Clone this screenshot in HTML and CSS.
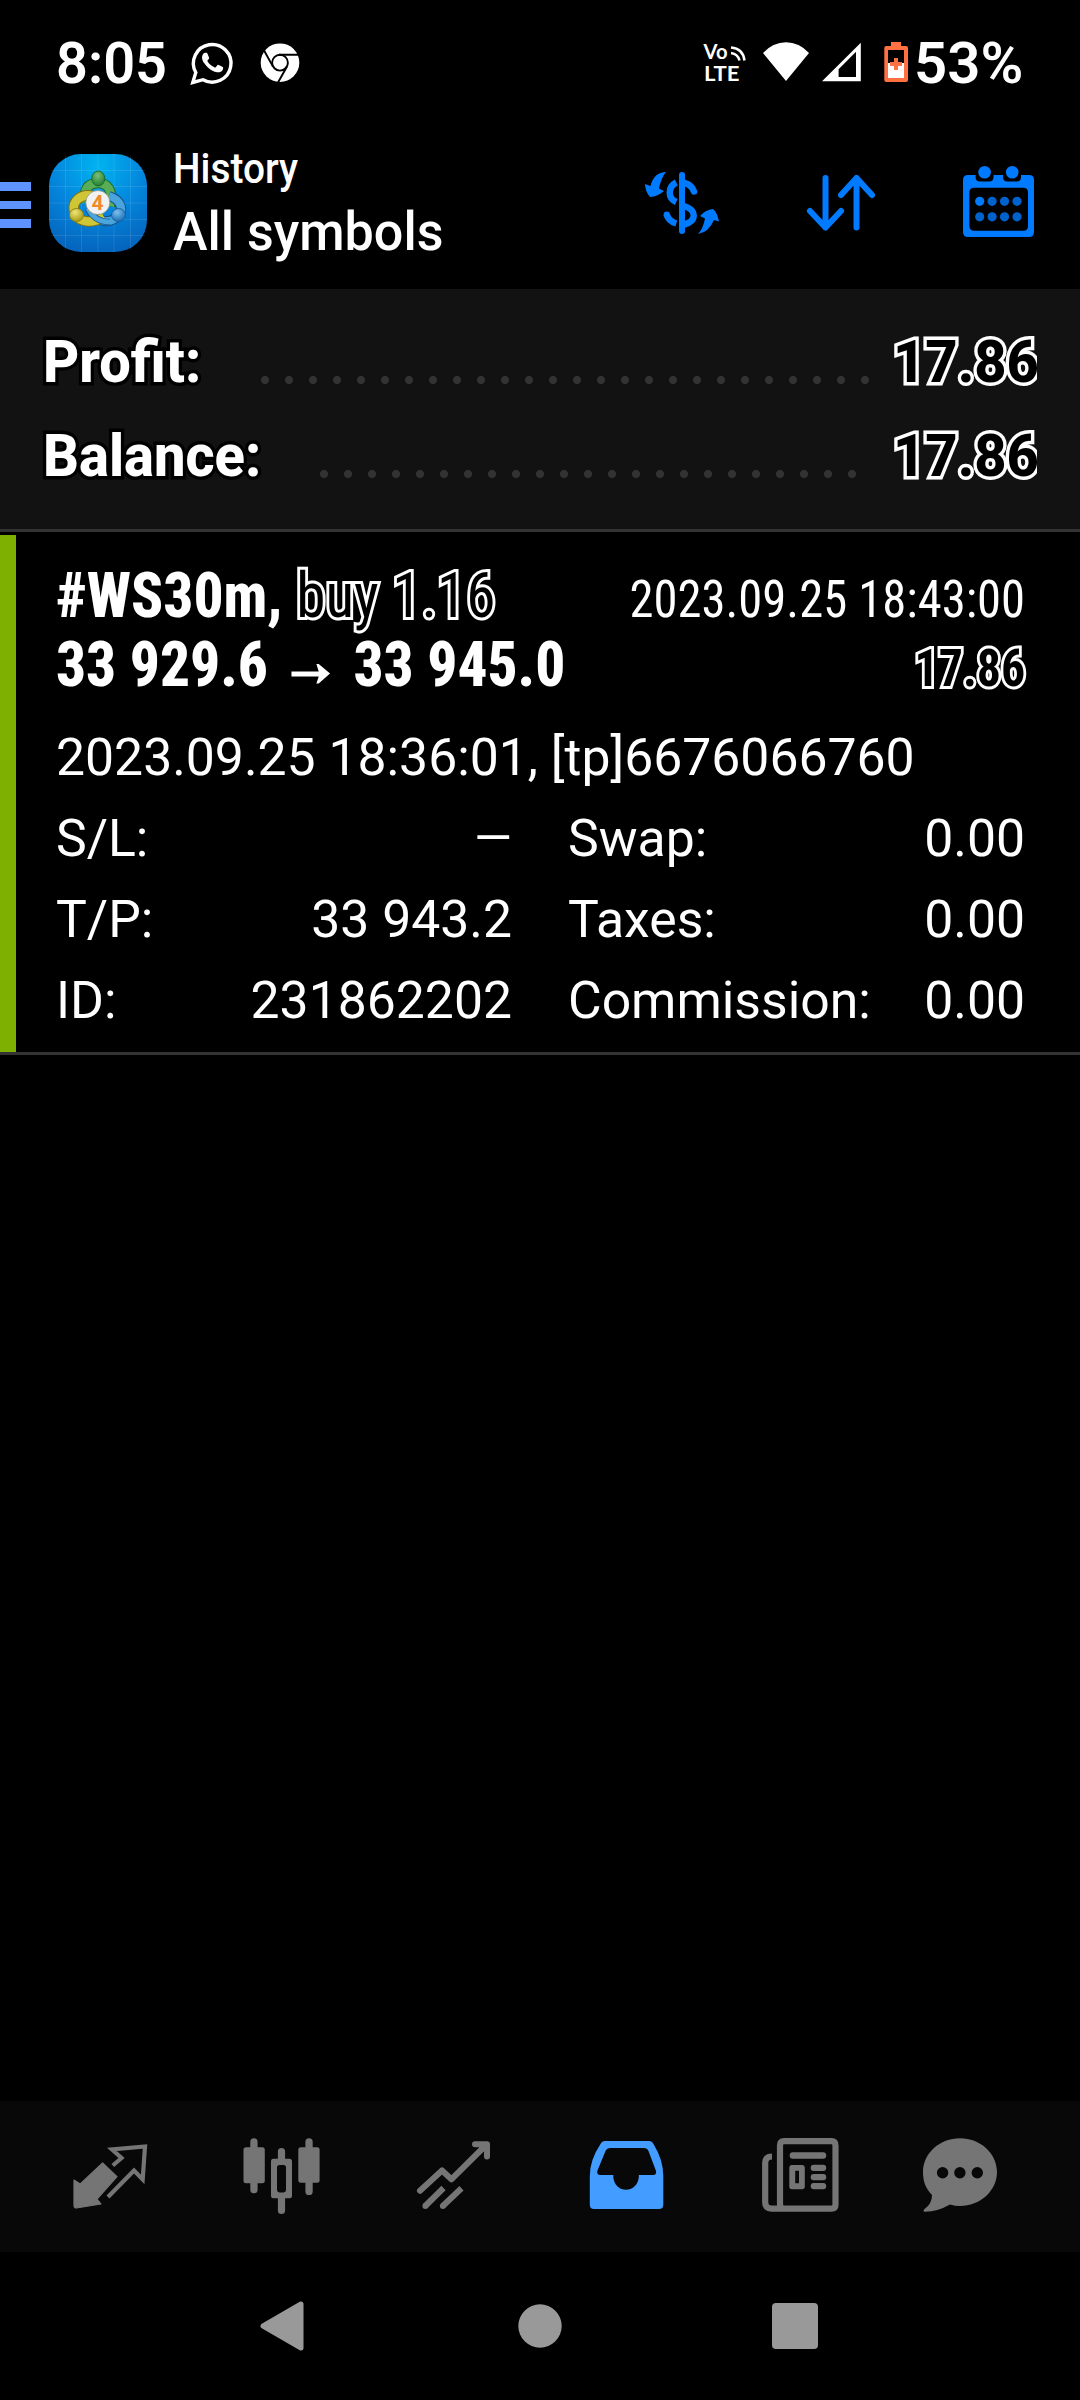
FILE: index.html
```html
<!DOCTYPE html>
<html lang="en">
<head>
<meta charset="utf-8">
<title>History</title>
<link rel="stylesheet" href="styles.css">
</head>
<body>
<div class="status">
  <span class="clock">8:05</span>
  <svg class="ic-apps" viewBox="188 38 114 50" width="114" height="50">
    <path d="M192.800 82.500L195.800 72.500A18.800 18.800 0 1 1 203 79.700Z" fill="none" stroke="#fff" stroke-width="3.400"/>
    <path transform="translate(191.500 41.500) scale(1.750)" fill="#fff" d="M17.472 14.382c-.297-.149-1.758-.867-2.03-.967-.273-.099-.471-.148-.67.15-.197.297-.767.966-.94 1.164-.173.199-.347.223-.644.075-.297-.15-1.255-.463-2.39-1.475-.883-.788-1.48-1.761-1.653-2.059-.173-.297-.018-.458.13-.606.134-.133.298-.347.446-.52.149-.174.198-.298.298-.497.099-.198.05-.371-.025-.52-.075-.149-.669-1.612-.916-2.207-.242-.579-.487-.5-.669-.51-.173-.008-.371-.01-.57-.01-.198 0-.52.074-.792.372-.272.297-1.04 1.016-1.04 2.479 0 1.462 1.065 2.875 1.213 3.074.149.198 2.096 3.2 5.077 4.487.709.306 1.262.489 1.694.625.712.227 1.36.195 1.871.118.571-.085 1.758-.719 2.006-1.413.248-.694.248-1.289.173-1.413-.074-.124-.272-.198-.57-.347"/>
    <circle cx="280" cy="62.700" r="19.300" fill="#fff"/>
    <g fill="none" stroke="#000" stroke-width="1.900">
      <circle cx="280" cy="62.700" r="7.900"/>
      <path d="M279 54.800H299M263.800 50L273 66.600M287 66.500L278 82.500"/>
    </g>
  </svg>
  <svg class="ic-signal" viewBox="700 38 212 48" width="212" height="48">
    <g class="volte">
      <text x="703.500" y="59" textLength="24" lengthAdjust="spacingAndGlyphs">Vo</text>
      <text x="704" y="80.500" textLength="35.500" lengthAdjust="spacingAndGlyphs">LTE</text>
    </g>
    <path d="M731 47.500Q743 48.500 744.500 60.500M731 53Q738 54 739.500 60.500" fill="none" stroke="#fff" stroke-width="2.500"/>
    <path d="M763 53Q773 42.300 786 42.300T809 53L786 81Z" fill="#fff"/>
    <path fill="#fff" fill-rule="evenodd" d="M822 81.300L860.800 42.700V81.300ZM838.600 69.300V77H856V51.700Z"/>
    <path fill="#ff7043" d="M891 42h10v4h5q2 0 2 2v32q0 2-2 2h-19.700q-2 0-2-2V48q0-2 2-2H891z"/>
    <path fill="#000" d="M888 50h16v13h-16z"/>
    <path fill="#fff" d="M888 63h16v15h-16z"/>
    <path fill="none" stroke="#ff7043" stroke-width="4" d="M896 58v12M890 64h12"/>
  </svg>
  <span class="battery">53%</span>
</div>

<header class="bar">
  <div class="menu"><i></i><i></i><i></i></div>
  <svg class="logo" viewBox="49 154 98 98" width="98" height="98">
    <defs>
      <radialGradient id="sky" cx=".5" cy=".12" r=".95"><stop offset="0" stop-color="#00b4f0"/><stop offset=".5" stop-color="#0485dc"/><stop offset="1" stop-color="#0560b8"/></radialGradient>
      <radialGradient id="gr" cx=".45" cy=".3" r=".7"><stop offset="0" stop-color="#7cc078"/><stop offset="1" stop-color="#1f7f2e"/></radialGradient>
      <radialGradient id="ye" cx=".4" cy=".3" r=".7"><stop offset="0" stop-color="#f0e67a"/><stop offset="1" stop-color="#a99c12"/></radialGradient>
      <radialGradient id="bl" cx=".4" cy=".3" r=".7"><stop offset="0" stop-color="#7cc0ee"/><stop offset="1" stop-color="#1a6fb5"/></radialGradient>
    </defs>
    <rect x="49" y="154" width="98" height="98" rx="32" fill="url(#sky)"/>
    <path d="M65.500 156V250M81.500 154V252M98 154V252M114 154V252M130.500 156V250M51 170.500H145M49 186.500H147M49 203H147M49 219.500H147M51 235.500H145" stroke="#fff" stroke-opacity=".1" fill="none"/>
    <path d="M86 202C82 189 89 183 98 183S114 190 110 206" fill="none" stroke="#1d6b2b" stroke-width="10.500"/>
    <path d="M86 202C82 189 89 183 98 183S114 190 110 206" fill="none" stroke="#58ad56" stroke-width="8.500"/>
    <path d="M109 196C122 200 125 212 116 218S98 222 90 209" fill="none" stroke="#14538c" stroke-width="10"/>
    <path d="M109 196C122 200 125 212 116 218S98 222 90 209" fill="none" stroke="#4aa5df" stroke-width="8"/>
    <path d="M93 196C80 193 72 202 74 211S88 226 104 217" fill="none" stroke="#7d7412" stroke-width="10.500"/>
    <path d="M93 196C80 193 72 202 74 211S88 226 104 217" fill="none" stroke="#cfc637" stroke-width="8.500"/>
    <path d="M88 208C92 217 99 222 110 222" fill="none" stroke="#14538c" stroke-width="6.500"/>
    <path d="M88 208C92 217 99 222 110 222" fill="none" stroke="#4aa5df" stroke-width="5"/>
    <ellipse cx="98.300" cy="178.500" rx="6.500" ry="7.500" fill="url(#gr)" stroke="#1d6b2b"/>
    <ellipse cx="76.500" cy="215" rx="7" ry="6.500" fill="url(#ye)" stroke="#8c8214"/>
    <ellipse cx="118.500" cy="215" rx="7" ry="6.500" fill="url(#bl)" stroke="#1a5f9f"/>
    <circle cx="97.800" cy="202.500" r="12" fill="#f1f1f4" stroke="#8b8b6a" stroke-width=".7"/>
    <text class="four" x="97.500" y="210" text-anchor="middle">4</text>
  </svg>
  <div class="titles"><span class="t1">History</span><span class="t2">All symbols</span></div>
  <svg class="tools" viewBox="640 160 400 84" width="400" height="84" fill="#007aff">
    <rect x="679" y="172" width="6" height="62" rx="3"/>
    <g fill="none" stroke="#007aff" stroke-width="6.500">
      <path d="M676.300 182.500C667.500 187 667.500 198 676.300 202"/>
      <path d="M684.500 183C689 184 692.500 187 694 191.500" stroke-linecap="round"/>
      <path d="M684 206C697 210 697 221 684 224.500"/>
      <path d="M676.300 223.500C671.500 222 668 219 666.700 214.500"/>
    </g>
    <circle cx="666.800" cy="214.800" r="3.200"/>
    <path d="M666 172Q654 172 650.500 186L645 184Q645 191 650 197Q658 196.500 664 191L659 188.500Q661 178 666 172Z"/>
    <path d="M698 234Q703 229 705 218.500L700 216Q705 210 713 209Q717 212 719 221.500L714 220Q709 232 698 234Z"/>
    <g fill="none" stroke="#007aff" stroke-width="6" stroke-linecap="round" stroke-linejoin="round">
      <path d="M825.500 178V227.500M810 211L825.500 227.500L841 211"/>
      <path d="M856.500 227.500V178M841 195L856.500 178L872 195"/>
    </g>
    <path fill-rule="evenodd" d="M968 175H975.600V177Q975.600 181.600 980 181.600H989Q993.500 181.600 993.500 177V175H1003V177Q1003 181.600 1007.500 181.600H1016.500Q1021 181.600 1021 177V175H1029Q1034 175 1034 180V232Q1034 237 1029 237H968Q963 237 963 232V180Q963 175 968 175ZM974 187.700Q969.400 187.700 969.400 192.500V226Q969.400 230.700 974 230.700H1023.500Q1028 230.700 1028 226V192.500Q1028 187.700 1023.500 187.700Z"/>
    <circle cx="984.600" cy="172.300" r="6.300"/><circle cx="1012.200" cy="172.300" r="6.300"/>
    <circle cx="979.700" cy="201.300" r="4.600"/>
    <g fill="#0062cc"><circle cx="992.100" cy="201.300" r="4.600"/><circle cx="1004.500" cy="201.300" r="4.600"/><circle cx="1017" cy="201.300" r="4.600"/><circle cx="979.700" cy="216.800" r="4.600"/><circle cx="992.100" cy="216.800" r="4.600"/><circle cx="1004.500" cy="216.800" r="4.600"/><circle cx="1017" cy="216.800" r="4.600"/></g>
  </svg>
</header>

<section class="summary">
  <div class="sum-row"><span class="sum-label">Profit:</span><i class="dots d1"></i><div class="sum-clip"><span class="sum-val">17.86</span></div></div>
  <div class="sum-row"><span class="sum-label">Balance:</span><i class="dots d2"></i><div class="sum-clip"><span class="sum-val">17.86</span></div></div>
</section>

<main class="deal">
  <div class="deal-body">
    <div class="head"><div class="sym">#WS30m, <span class="buy">buy 1.16</span></div><div class="when">2023.09.25 18:43:00</div></div>
    <div class="head"><div class="sym">33 929.6 <span class="arrow"><svg viewBox="0 0 41 20" width="42" height="20"><path d="M0 7.500H29L26.500 0H29L41 9.500L29 19.500H26.500L29 12.500H0Z" fill="#fff"/></svg></span> 33 945.0</div><div class="gain">17.86</div></div>
    <div class="line first">2023.09.25 18:36:01, [tp]6676066760</div>
    <div class="grid">
      <span>S/L:</span><b class="dash">—</b><span>Swap:</span><b>0.00</b>
      <span>T/P:</span><b>33 943.2</b><span>Taxes:</span><b>0.00</b>
      <span>ID:</span><b>231862202</b><span>Commission:</span><b>0.00</b>
    </div>
  </div>
</main>

<nav class="tabs">
  <svg viewBox="0 2101 1080 151" width="1080" height="151" fill="#757575">
    <path d="M74 2180L80.200 2184L102.600 2163L117 2176.700L97 2199L101 2204L76.400 2208Q74 2208 74 2205.500Z" stroke="#757575" stroke-width="1.200" stroke-linejoin="round"/>
    <path d="M112.800 2165.500L121.500 2158L112 2149.500L145 2146.500L142.700 2179.500L134 2170.500L108 2197" fill="none" stroke="#757575" stroke-width="4.200"/>
    <rect x="243.500" y="2147.300" width="21.300" height="36" rx="2.500"/><rect x="250.300" y="2138.300" width="7.300" height="55" rx="3.600"/>
    <path fill-rule="evenodd" d="M273.500 2158.700H277.900V2151.500A3.600 3.600 0 0 1 285.100 2151.500V2158.700H289.500Q292 2158.700 292 2161.200V2195.800Q292 2198.300 289.500 2198.300H285.100V2210.500A3.600 3.600 0 0 1 277.900 2210.500V2198.300H273.500Q271 2198.300 271 2195.800V2161.200Q271 2158.700 273.500 2158.700ZM279.500 2165Q277 2165 277 2167.500V2190Q277 2192.400 279.500 2192.400H283.500Q286 2192.400 286 2190V2167.500Q286 2165 283.500 2165Z"/>
    <rect x="298.300" y="2147.300" width="21.300" height="35.500" rx="2.500"/><rect x="305.400" y="2138.300" width="7.300" height="56.700" rx="3.600"/>
    <g fill="none" stroke="#757575" stroke-width="6">
      <path d="M420 2190.700L442 2170.500L451.400 2179.300L485.500 2145.500M475 2144.300H487V2156.500" stroke-linecap="round" stroke-linejoin="round"/>
      <path d="M425.300 2206L443.500 2188M442.800 2206L461.500 2188.300"/>
    </g>
    <circle cx="425.400" cy="2206" r="3"/><circle cx="442.900" cy="2206" r="3"/>
    <path fill="#439cff" fill-rule="evenodd" d="M605 2141H649Q652 2141 653.500 2144Q663.300 2160 663.300 2176V2204.500Q663.300 2209 659 2209H594Q589.800 2209 589.800 2204.500V2176Q589.800 2160 600.500 2144Q602 2141 605 2141ZM610.500 2148Q607 2148 605.500 2151L597.300 2171Q596.600 2175 600.500 2175H613.300V2177C614.500 2194 637.500 2194 638.800 2177V2175H653Q656.800 2175 656 2171L648.500 2151Q647.500 2148 643.500 2148Z"/>
    <path fill="none" stroke="#757575" stroke-width="6.200" d="M784 2141.100H831.500Q835.500 2141.100 835.500 2145.500V2204.500Q835.500 2208.600 831.500 2208.600H771.500Q765.200 2208.600 765.200 2202V2163Q765.200 2156.500 772 2156.500M784 2141.100Q780 2141.100 780 2145.500V2204Q780 2208.600 784 2208.600"/>
    <rect x="789.700" y="2152.300" width="36.500" height="6.400" rx="3"/>
    <path fill-rule="evenodd" d="M792 2165H802Q804.800 2165 804.800 2168V2186.500Q804.800 2189.300 802 2189.300H792Q789.300 2189.300 789.300 2186.500V2168Q789.300 2165 792 2165ZM795.200 2170.700V2183.300H799V2170.700Z"/>
    <rect x="810.700" y="2164.700" width="15.500" height="6.200" rx="3"/><rect x="810.700" y="2174" width="15.500" height="6.200" rx="3"/><rect x="810.700" y="2183" width="15.500" height="6.200" rx="3"/>
    <path fill-rule="evenodd" d="M932 2195C925 2188 923 2180 923 2172C923 2153 940 2138.200 960 2138.200S997 2153 997 2172S980 2206 960 2206Q955 2206 950 2204.500Q937 2212 924.500 2211.800Q922.500 2211 924.500 2209Q932 2204 932 2195ZM936.900 2172.700a5.700 5.700 0 1 0 11.400 0a5.700 5.700 0 1 0 -11.400 0M954.200 2172.700a5.700 5.700 0 1 0 11.400 0a5.700 5.700 0 1 0 -11.400 0M971.600 2172.700a5.700 5.700 0 1 0 11.400 0a5.700 5.700 0 1 0 -11.400 0"/>
  </svg>
</nav>
<footer class="sys">
  <svg viewBox="250 2296 600 60" width="600" height="60" fill="#999">
    <path d="M263 2326L301 2304V2348Z" stroke="#999" stroke-width="5" stroke-linejoin="round"/>
    <circle cx="540" cy="2326" r="21.700"/>
    <rect x="772" y="2303" width="46" height="46" rx="4"/>
  </svg>
</footer>
</body>
</html>
```
FILE: styles.css
```css
* { box-sizing: border-box; }
body {
  margin: 0; width: 1080px; height: 2400px; background: #000; color: #fff;
  font-family: Roboto, "Liberation Sans", sans-serif; overflow: hidden;
  display: flex; flex-direction: column;
}
svg { display: block; flex: none; overflow: visible; }
i { font-style: normal; }

.status { height: 130px; display: flex; align-items: flex-start; padding: 38px 0 0 56px; }
.clock, .battery { font-size: 57px; line-height: 52px; font-weight: 600; white-space: nowrap; transform-origin: 0 0; }
.clock { width: 132px; transform: scaleX(.98); }
.battery { margin-left: 2px; transform: scaleX(1.02); }
.ic-signal { margin-left: 398px; }
.volte { font: 700 20px Lato, sans-serif; fill: #fff; }

.bar { height: 159px; display: flex; align-items: flex-start; padding-top: 24px; }
.menu { width: 31px; margin-top: 28px; display: flex; flex-direction: column; gap: 10px; }
.menu i { height: 8.700px; background: #5f93ff; }
.logo { margin-left: 18px; }
.four { font: 700 21px Roboto, sans-serif; fill: #f08a2c; }
.titles { width: 440px; margin: -10px 0 0 26px; display: flex; flex-direction: column; align-items: flex-start; }
.titles span { transform-origin: 0 0; white-space: nowrap; }
.t1 { font-size: 42px; line-height: 50px; font-weight: 500; transform: scaleX(.925); }
.t2 { font-size: 54.500px; line-height: 74px; font-weight: 500; transform: scaleX(.955); }
.tools { margin: 6px 0 0 27px; }

.summary { height: 243px; background: #121212; border-bottom: 3px solid #333; padding: 26px 43px 0 43px; }
.sum-row { height: 94px; display: flex; align-items: center; }
.sum-label, .sum-val {
  font-size: 59px; font-weight: 800; line-height: 94px; white-space: nowrap;
  transform: scaleX(.95); transform-origin: 0 50%; paint-order: stroke fill; -webkit-text-stroke: 7px #000; stroke-linejoin: round;
}
.sum-label { width: 218px; }
.sum-clip { width: 150px; overflow: hidden; margin-left: auto; }
.sum-val { display: block; margin-left: 6px; color: #000; -webkit-text-stroke-color: #fff; }
.dots { height: 8px; margin-top: 35px; background: radial-gradient(circle at 4px 4px, #333 3.600px, transparent 4.400px) 0 0 / 24px 8px repeat-x; }
.d1 { width: 608px; }
.d2 { width: 536px; margin-left: 59px; }

.deal { height: 523px; padding-top: 3px; border-bottom: 3px solid #333; }
.deal-body { height: 517px; border-left: 16px solid #7db000; padding: 27px 55px 0 40px; }
.head { height: 68.500px; line-height: 68.500px; display: flex; justify-content: space-between; font-family: "Roboto Condensed", Roboto, sans-serif; font-stretch: 75%; white-space: nowrap; }
.sym { font-size: 63px; font-weight: 800; transform: scaleX(.94); transform-origin: 0 0; }
.buy { font-weight: 400; color: #000; -webkit-text-stroke: 6px #fff; paint-order: stroke fill; }
.arrow { display: inline-block; vertical-align: 2px; margin: 0 10px; }
.when { font-size: 52px; line-height: 76px; transform: scaleX(.935); transform-origin: 100% 0; }
.gain { font-size: 52px; font-weight: 700; line-height: 76px; color: #000; -webkit-text-stroke: 6px #fff; paint-order: stroke fill; transform: scaleX(.92); transform-origin: 100% 0; }
.line, .grid { font-size: 51.700px; line-height: 81px; white-space: nowrap; }
.first { margin-top: 18px; }
.grid { display: grid; grid-template-columns: 160px 296px auto 1fr; }
.grid b { font-weight: 400; text-align: right; }
.grid .dash { transform: scaleX(.94); transform-origin: 100% 0; }
.grid span:nth-child(4n+3) { margin-left: 56px; }

.tabs { margin-top: auto; height: 151px; background: #080808; flex: none; }
.sys { height: 148px; flex: none; padding: 44px 0 0 250px; }
.bar, .status, .summary, .deal { flex: none; }
```
